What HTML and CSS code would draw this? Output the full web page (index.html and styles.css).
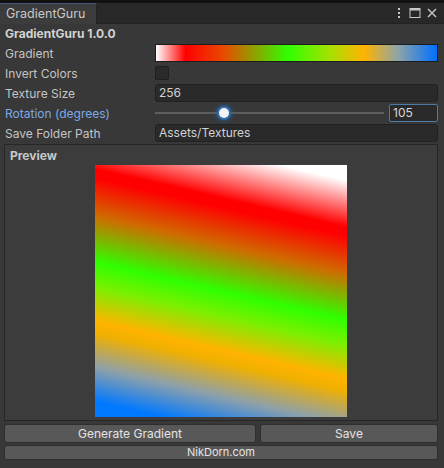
FILE: index.html
```html
<!DOCTYPE html>
<html>
<head>
<meta charset="utf-8">
<link rel="stylesheet" href="styles.css">
</head>
<body>
<div class="window">
  <div class="titlebar">
    <div class="tab">GradientGuru</div>
    <div class="tools">
      <svg width="10" height="12" viewBox="0 0 10 12"><rect x="4" y="1" width="2" height="2" fill="#c8c8c8"/><rect x="4" y="5" width="2" height="2" fill="#c8c8c8"/><rect x="4" y="9" width="2" height="2" fill="#c8c8c8"/></svg>
      <svg width="12" height="12" viewBox="0 0 12 12"><rect x="1" y="1.5" width="10" height="9" fill="none" stroke="#c8c8c8" stroke-width="1"/><rect x="1" y="1.5" width="10" height="2" fill="#c8c8c8"/></svg>
      <svg width="12" height="12" viewBox="0 0 12 12"><path d="M2 2 L10 10 M10 2 L2 10" stroke="#c8c8c8" stroke-width="1.4"/></svg>
    </div>
  </div>
  <div class="content">
    <div class="row"><span class="title">GradientGuru 1.0.0</span></div>
    <div class="row"><span class="label">Gradient</span><div class="gradbar"></div></div>
    <div class="row"><span class="label">Invert Colors</span><div class="check"></div></div>
    <div class="row"><span class="label">Texture Size</span><div class="field">256</div></div>
    <div class="row"><span class="label active">Rotation (degrees)</span>
      <div class="slider"><div class="track"></div><div class="thumb"></div></div>
      <div class="num">105</div>
    </div>
    <div class="row"><span class="label">Save Folder Path</span><div class="field">Assets/Textures</div></div>
    <div class="preview">
      <div class="ptitle">Preview</div>
      <div class="pimg"></div>
    </div>
    <div class="buttons">
      <div class="btn gen">Generate Gradient</div>
      <div class="btn save">Save</div>
    </div>
    <div class="btn link">NikDorn.com</div>
  </div>
</div>
</body>
</html>
```
FILE: styles.css
```css
html, body { margin: 0; padding: 0; }
body {
  width: 444px; height: 468px; overflow: hidden;
  background: #383838;
  font-family: Inter, "Noto Sans", sans-serif;
  font-size: 12px;
  color: #c4c4c4;
}
.window { display: flex; flex-direction: column; height: 468px; }
.titlebar {
  height: 20px;
  border-top: 3px solid #111;
  background: #282828;
  display: flex; align-items: stretch; justify-content: space-between;
  border-bottom: 1px solid #232323;
}
.tab {
  width: 90px;
  background: #3c3c3c;
  border-top: 1px solid #3f5a78;
  border-right: 1px solid #232323;
  padding-left: 6px;
  line-height: 19px;
  font-size: 12.5px;
  color: #c8c8c8;
  margin-bottom: -1px;
}
.tools { display: flex; align-items: center; gap: 5px; padding-right: 6px; }
.content { display: flex; flex-direction: column; padding: 0 6px 0 4px; background: #383838; flex: 1; }
.row { display: flex; align-items: center; height: 18px; margin-bottom: 2px; }
.row:first-child { height: 19px; margin-bottom: 1px; }
.title { font-weight: bold; color: #d2d2d2; padding-left: 1px; }
.label { width: 150px; flex: none; padding-left: 1px; }
.label.active { color: #7ca9e4; }
.gradbar {
  flex: 1; height: 16px; border: 1px solid #1c1c1c;
  background: linear-gradient(to right, #ffffff 0%, #ff0000 10.5%, #e84a00 24%, #30ff00 47%, #a8e000 62%, #ffb300 74%, #8fa5a6 86%, #0070ff 100%);
}
.check { width: 12px; height: 12px; background: #2a2a2a; border: 1px solid #1f1f1f; border-radius: 2px; }
.field {
  flex: 1; height: 16px; background: #2a2a2a; border: 1px solid #212121; border-radius: 3px;
  line-height: 16px; padding-left: 3px; color: #d2d2d2;
}
.slider { flex: 1; position: relative; height: 18px; margin-right: 5px; }
.track { position: absolute; left: 0; right: 0; top: 8px; height: 2px; background: #5e5e5e; }
.thumb {
  position: absolute; left: 64px; top: 4px; width: 10px; height: 10px; border-radius: 50%;
  background: #f4f4f4; box-shadow: 0 0 0 2px #2f6ca8, 0 0 4px 3px rgba(40,100,170,0.7);
}
.num {
  width: 44px; height: 16px; border: 1px solid #4e7aa8; border-radius: 2px; background: #2a2a2a;
  line-height: 16px; padding-left: 3px; color: #d8d8d8;
}
.preview {
  height: 275px; border: 1px solid #262626; background: #3c3c3c;
  display: flex; flex-direction: column; align-items: center;
}
.ptitle { align-self: flex-start; font-weight: bold; padding: 3px 0 0 5px; height: 17px; color: #c8c8c8; }
.pimg {
  width: 252px; height: 252px;
  background: linear-gradient(193deg, #ffffff 0%, #ffffff 5%, #ff0000 20%, #ff0000 23%, #d06a00 35%, #2fff00 50%, #7af000 58%, #ffb300 69%, #f0b000 73%, #8da0aa 84%, #0078ff 95%, #0078ff 100%);
}
.buttons { display: flex; gap: 4px; margin-top: 3px; }
.btn {
  height: 17px; line-height: 17px; text-align: center; background: #585858;
  border: 1px solid #2e2e2e; border-radius: 3px; color: #e4e4e4;
}
.gen { width: 250px; }
.save { flex: 1; }
.link { margin-top: 2px; height: 13px; line-height: 13px; font-size: 11px; }
```
